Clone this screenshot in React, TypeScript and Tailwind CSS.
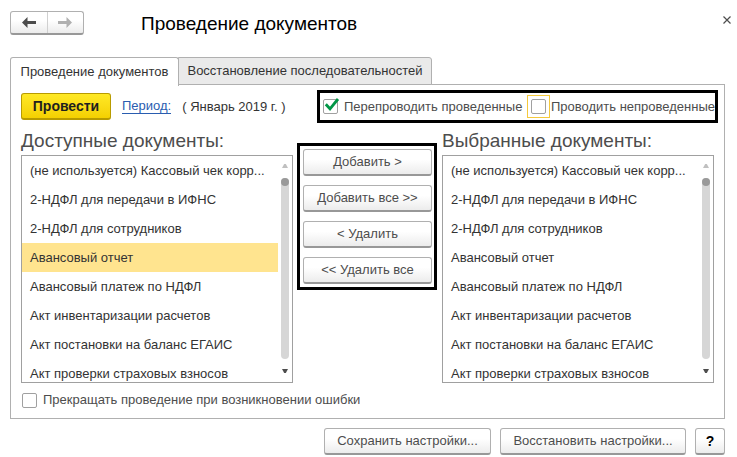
import { useState } from "react";
import type { ReactNode } from "react";
import clsx from "clsx";

const documents = [
  "(не используется) Кассовый чек корр...",
  "2-НДФЛ для передачи в ИФНС",
  "2-НДФЛ для сотрудников",
  "Авансовый отчет",
  "Авансовый платеж по НДФЛ",
  "Акт инвентаризации расчетов",
  "Акт постановки на баланс ЕГАИС",
  "Акт проверки страховых взносов",
];

const moveActions = ["Добавить >", "Добавить все >>", "< Удалить", "<< Удалить все"];

type ButtonProps = {
  children: ReactNode;
  className?: string;
};

function Button({ children, className }: ButtonProps) {
  return (
    <button
      type="button"
      className={clsx(
        "h-[27px] whitespace-nowrap rounded-[3px] border border-b-2 border-[#b0b0b0] border-b-[#989898] bg-linear-to-b from-white from-40% to-[#ececec]",
        className,
      )}
    >
      {children}
    </button>
  );
}

type CheckboxProps = {
  id: string;
  label: string;
  defaultChecked?: boolean;
  framed?: boolean;
};

function Checkbox({ id, label, defaultChecked, framed }: CheckboxProps) {
  return (
    <div className={clsx("flex items-center", framed ? "gap-px" : "gap-1.5")}>
      <span
        className={clsx(
          "relative flex shrink-0",
          framed && "border border-[#f5c93c] p-[3px]",
        )}
      >
        <input
          id={id}
          type="checkbox"
          defaultChecked={defaultChecked}
          className="peer size-[15px] appearance-none rounded-xs border border-[#a0a0a0] bg-white outline-none"
        />
        <svg
          viewBox="0 0 17 15"
          className="pointer-events-none absolute -top-px left-0 hidden h-[15px] w-[17px] peer-checked:block"
        >
          <path
            d="M2.8 6.2 7 10.8 15 1"
            fill="none"
            stroke="#009646"
            strokeWidth="2.8"
          />
        </svg>
      </span>
      <label htmlFor={id} className="whitespace-nowrap">
        {label}
      </label>
    </div>
  );
}

function ScrollTrack() {
  return (
    <div className="mx-[3px] flex w-2 flex-col items-center pt-2 pb-[9px]">
      <svg viewBox="0 0 6 4" className="h-1 w-1.5 shrink-0">
        <path d="M0 4 2.2 0h1.6L6 4z" fill="#c0c0c0" />
      </svg>
      <div className="mt-2.5 mb-2.5 w-2 flex-1 rounded-full bg-[#d6d6d6]">
        <div className="size-2 rounded-full bg-[#999999]" />
      </div>
      <svg viewBox="0 0 6 4" className="h-1 w-1.5 shrink-0">
        <path d="M0 0h6L3.8 4H2.2z" fill="#4d4d4d" />
      </svg>
    </div>
  );
}

type DocumentListProps = {
  title: string;
  initialSelected?: number;
};

function DocumentList({ title, initialSelected = -1 }: DocumentListProps) {
  const [selected, setSelected] = useState(initialSelected);

  return (
    <section className="min-w-0 flex-1">
      <h2 className="h-[27px] whitespace-nowrap text-[19px] leading-[26px]">
        {title}
      </h2>
      <div className="flex h-[228px] overflow-hidden border border-[#a0a0a0] text-[#333333]">
        <ul role="listbox" aria-label={title} className="min-w-0 flex-1">
          {documents.map((name, index) => (
            <li
              key={name}
              role="option"
              aria-selected={index === selected}
              onClick={() => setSelected(index)}
              className={clsx(
                "truncate pr-2 pl-2 leading-[29px]",
                index === selected && "bg-[#ffe48f]",
              )}
            >
              {name}
            </li>
          ))}
        </ul>
        <ScrollTrack />
      </div>
    </section>
  );
}

function ArrowIcon({ flipped }: { flipped?: boolean }) {
  return (
    <svg
      viewBox="0 0 14 11"
      className={clsx("h-[11px] w-3.5", flipped && "rotate-180")}
    >
      <path d="M0 5.5 5.5 0v4H14v3H5.5v4z" fill="currentColor" />
    </svg>
  );
}

export default function App() {
  return (
    <main className="bg-white pt-[11px] pr-3 pl-2.5 font-['Liberation_Sans',Arial,sans-serif] text-[13px] leading-4 text-[#4d4d4d]">
      <header className="flex h-[46px] items-start">
        <div className="flex h-6 w-[74px] rounded-[3px] border border-b-2 border-[#b0b0b0] border-b-[#989898] bg-linear-to-b from-white from-40% to-[#ececec]">
          <button
            type="button"
            aria-label="Назад"
            className="flex flex-1 items-center justify-center border-r border-[#d0d0d0]"
          >
            <ArrowIcon />
          </button>
          <button
            type="button"
            aria-label="Вперед"
            className="flex flex-1 items-center justify-center text-[#b0b0b0]"
          >
            <ArrowIcon flipped />
          </button>
        </div>
        <h1 className="ml-[57px] flex-1 text-[19px] leading-[26px] text-black">
          Проведение документов
        </h1>
        <button type="button" aria-label="Закрыть" className="-mr-1.5 pt-[5px]">
          <svg viewBox="0 0 8 8" className="size-2">
            <path d="M.5.5l7 7M7.5.5l-7 7" stroke="currentColor" strokeWidth="1.2" />
          </svg>
        </button>
      </header>

      <div role="tablist" className="flex h-7 text-[#333333]">
        <button
          type="button"
          role="tab"
          aria-selected="true"
          className="z-10 -mb-px w-[169px] whitespace-nowrap rounded-t-[3px] border border-b-0 border-[#b0b0b0] bg-white"
        >
          Проведение документов
        </button>
        <button
          type="button"
          role="tab"
          aria-selected="false"
          className="-ml-px w-[254px] whitespace-nowrap rounded-tr-[3px] border border-[#b0b0b0] bg-[#eaeaea]"
        >
          Восстановление последовательностей
        </button>
      </div>

      <div className="-mt-px border border-[#b0b0b0] pt-[5px] pr-2.5 pb-2.5 pl-2.5">
        <div className="-mr-1 flex h-[33px] items-center">
          <button
            type="button"
            className="h-[27px] w-[90px] rounded-[3px] border border-b-2 border-[#b89b00] bg-linear-to-b from-[#ffe924] to-[#f4d000] text-[14px] font-bold text-[#1f1f1f]"
          >
            Провести
          </button>
          <a
            href="#period"
            className="ml-[11px] border-b border-[#2a5db0] leading-[14px] text-[#2a5db0]"
          >
            Период:
          </a>
          <span className="ml-[11px] whitespace-nowrap text-[#333333]">
            ( Январь 2019 г. )
          </span>
          <div className="ml-auto flex h-[33px] w-[401px] items-center justify-between border-3 border-black pl-[3px]">
            <Checkbox id="repost" label="Перепроводить проведенные" defaultChecked />
            <Checkbox id="post-new" label="Проводить непроведенные" framed />
          </div>
        </div>

        <div className="mt-[5px] flex">
          <DocumentList title="Доступные документы:" initialSelected={3} />
          <div className="mt-[15px] mr-[5px] ml-1 flex w-[140px] flex-col gap-[9px] self-start border-3 border-black p-[3px] pr-0.5">
            {moveActions.map((action) => (
              <Button key={action}>{action}</Button>
            ))}
          </div>
          <DocumentList title="Выбранные документы:" />
        </div>

        <div className="mt-[9px] ml-px">
          <Checkbox
            id="stop-on-error"
            label="Прекращать проведение при возникновении ошибки"
          />
        </div>
      </div>

      <footer className="mt-[9px] flex justify-end gap-[9px]">
        <Button className="w-[167px]">Сохранить настройки...</Button>
        <Button className="w-[186px]">Восстановить настройки...</Button>
        <Button className="w-[30px] text-[14px] font-bold text-black">?</Button>
      </footer>
    </main>
  );
}
